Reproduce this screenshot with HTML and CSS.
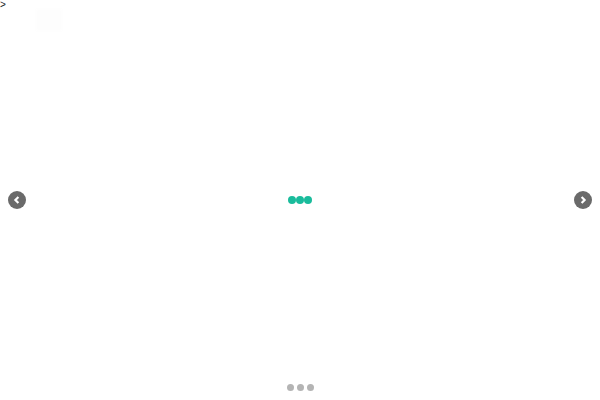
FILE: index.html
```html
<!DOCTYPE html>
<html lang="en">
<head>
  <meta charset="UTF-8">
  <meta name="viewport" content="width=device-width, initial-scale=1.0">
  <title>Slider</title>
  <link rel="stylesheet" href="styles.css">
</head>
<body>
<div class="slider">
  <span class="stray">&gt;</span>
  <div class="ghost"></div>

  <button class="arrow" aria-label="Previous">
    <svg width="18" height="18" viewBox="0 0 18 18"><path d="M10.4 6 7.4 9l3 3" fill="none" stroke="#fff" stroke-width="2.2"/></svg>
  </button>

  <!-- Loading spinner -->
  <div class="loader">
    <span class="loader-dot"></span>
    <span class="loader-dot"></span>
    <span class="loader-dot"></span>
  </div>

  <button class="arrow" aria-label="Next">
    <svg width="18" height="18" viewBox="0 0 18 18"><path d="M7.6 6l3 3-3 3" fill="none" stroke="#fff" stroke-width="2.2"/></svg>
  </button>

  <div class="pager">
    <span class="pager-dot"></span>
    <span class="pager-dot"></span>
    <span class="pager-dot"></span>
  </div>
</div>
</body>
</html>
```

FILE: styles.css
```css
html, body {
  margin: 0;
  background: #fff;
}
.slider {
  position: relative;
  height: 400px;
  padding: 0 8px;
  box-sizing: border-box;
  display: flex;
  align-items: center;
  justify-content: space-between;
  overflow: hidden;
}
.stray {
  position: absolute;
  left: 0;
  top: 0;
  font-family: "Liberation Sans", sans-serif;
  font-size: 10px;
  line-height: 10px;
  color: #222;
}
.ghost {
  position: absolute;
  left: 36px;
  top: 9px;
  width: 26px;
  height: 22px;
  background: #fdfdfd;
  filter: blur(1px);
}
.arrow {
  width: 18px;
  height: 18px;
  padding: 0;
  border: none;
  border-radius: 50%;
  background: #6a6a6a;
  display: flex;
}
.loader {
  display: flex;
  margin-bottom: 1px;
}
.loader-dot {
  width: 8px;
  height: 8px;
  border-radius: 50%;
  background: #1abc9c;
}
.pager {
  position: absolute;
  left: 0;
  right: 0;
  bottom: 9px;
  display: flex;
  justify-content: center;
  gap: 3px;
}
.pager-dot {
  width: 7px;
  height: 7px;
  border-radius: 50%;
  background: #b4b4b4;
}
```
